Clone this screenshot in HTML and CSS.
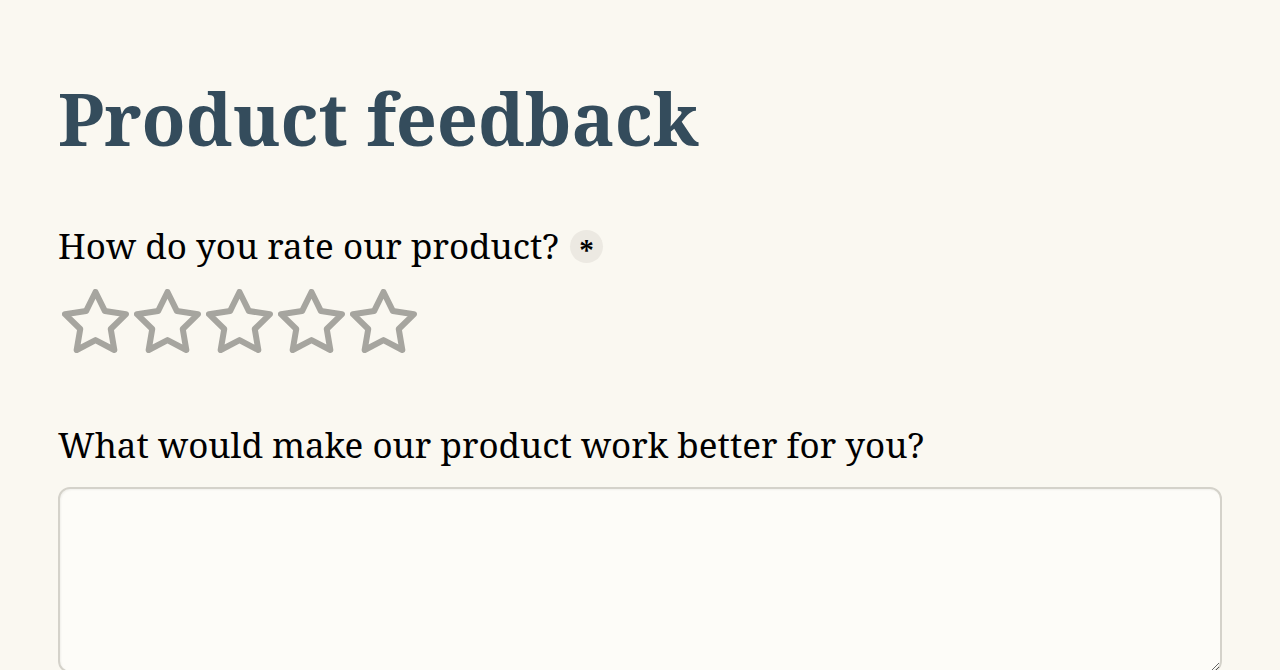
FILE: index.html
```html
<!DOCTYPE html>
<html lang="en">
<head>
<meta charset="utf-8">
<title>Product feedback</title>
<link rel="stylesheet" href="styles.css">
</head>
<body>
<main class="page">
  <h1 class="title">Product feedback</h1>
  <form class="form">
    <div class="field">
      <div class="label-row">
        <label class="label">How do you rate our product?</label>
        <span class="required" aria-label="required">*</span>
      </div>
      <div class="stars">
        <svg class="star" viewBox="0 0 67 64" width="67" height="64"><polygon points="33.5,3 42.92,22.09 64,25.17 48.75,40.02 52.35,61 33.5,51.09 14.65,61 18.25,40.02 3,25.17 24.08,22.09"/></svg>
        <svg class="star" viewBox="0 0 67 64" width="67" height="64"><polygon points="33.5,3 42.92,22.09 64,25.17 48.75,40.02 52.35,61 33.5,51.09 14.65,61 18.25,40.02 3,25.17 24.08,22.09"/></svg>
        <svg class="star" viewBox="0 0 67 64" width="67" height="64"><polygon points="33.5,3 42.92,22.09 64,25.17 48.75,40.02 52.35,61 33.5,51.09 14.65,61 18.25,40.02 3,25.17 24.08,22.09"/></svg>
        <svg class="star" viewBox="0 0 67 64" width="67" height="64"><polygon points="33.5,3 42.92,22.09 64,25.17 48.75,40.02 52.35,61 33.5,51.09 14.65,61 18.25,40.02 3,25.17 24.08,22.09"/></svg>
        <svg class="star" viewBox="0 0 67 64" width="67" height="64"><polygon points="33.5,3 42.92,22.09 64,25.17 48.75,40.02 52.35,61 33.5,51.09 14.65,61 18.25,40.02 3,25.17 24.08,22.09"/></svg>
      </div>
    </div>
    <div class="field field-text">
      <label class="label" for="better">What would make our product work better for you?</label>
      <textarea id="better" class="textarea"></textarea>
    </div>
  </form>
</main>
</body>
</html>
```
FILE: styles.css
```css
html, body {
  margin: 0;
  padding: 0;
  background: #faf8f1;
}
body {
  font-family: "Noto Serif", "DejaVu Serif", serif;
  color: #000;
}
.page {
  padding: 76px 58px 0 58px;
}
.title {
  margin: 0;
  font-size: 72px;
  line-height: 84px;
  font-weight: 700;
  color: #344c5c;
}
.form {
  margin-top: 62px;
  display: flex;
  flex-direction: column;
}
.label-row {
  display: flex;
  align-items: center;
  gap: 11px;
}
.label {
  font-size: 35px;
  line-height: 48px;
  display: block;
}
.required {
  width: 33px;
  height: 33px;
  border-radius: 50%;
  background: #ece9e2;
  display: flex;
  align-items: center;
  justify-content: center;
  font-size: 28px;
  font-weight: 700;
  line-height: 1;
  padding-top: 9px;
  box-sizing: border-box;
}
.stars {
  margin-top: 19px;
  display: flex;
  gap: 5px;
  margin-left: 4px;
}
.star {
  display: block;
  fill: none;
  stroke: #a6a59f;
  stroke-width: 6;
  stroke-linejoin: round;
}
.field-text {
  margin-top: 68px;
}
.textarea {
  display: block;
  margin-top: 18px;
  width: 100%;
  height: 186px;
  box-sizing: border-box;
  border: 2px solid #d4d2ca;
  border-radius: 12px;
  background: #fdfcf8;
  box-shadow: inset 1px 1px 2px rgba(0, 0, 0, 0.05);
  font-family: inherit;
  font-size: 24px;
}
```
